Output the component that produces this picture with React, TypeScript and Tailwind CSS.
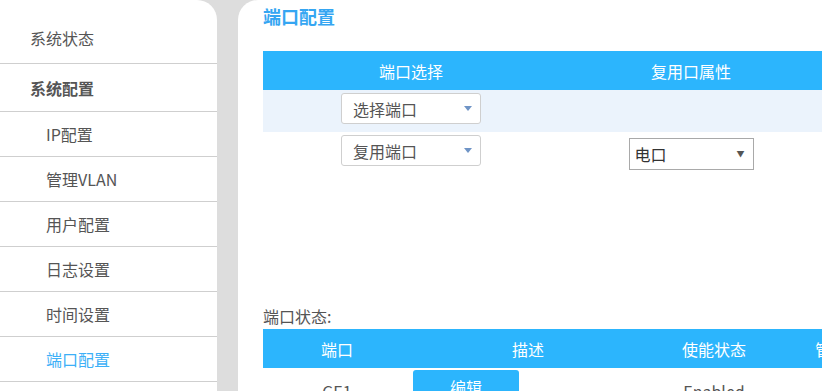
const menu = [
  { label: '用户配置' },
  { label: '日志设置' },
  { label: '时间设置' },
  { label: '端口配置', active: true },
];

const FakeSelect = ({ text }: { text: string }) => (
  <div className="flex h-[31px] w-[140px] items-center justify-between rounded-[3px] border border-[#cfcfcf] bg-white pl-[11px] pr-[8px] text-[16px] text-[#555]">
    <span>{text}</span>
    <span className="h-0 w-0 border-x-[4px] border-t-[5px] border-x-transparent border-t-[#6f94c6]" />
  </div>
);

const App = () => {
  return (
    <div
      className="flex h-[391px] w-[822px] overflow-hidden bg-[#dddddd]"
      style={{ fontFamily: '"Noto Sans CJK SC", "Noto Sans", sans-serif' }}
    >
      {/* sidebar */}
      <div className="w-[217px] shrink-0 rounded-tr-[20px] bg-white text-[16px] text-[#555]">
        <div className="flex h-[64px] items-center border-b border-[#cfcfcf] pl-[30px] pt-[13px]">系统状态</div>
        <div className="flex h-[48px] items-center border-b border-[#cfcfcf] pl-[30px] font-bold">系统配置</div>
        <div className="flex h-[45px] items-center border-b border-[#cfcfcf] pl-[46px] pb-[1px]">IP配置</div>
        <div className="flex h-[45px] items-center border-b border-[#cfcfcf] pl-[46px] pb-[1px]">管理VLAN</div>
        {menu.map((m) => (
          <div
            key={m.label}
            className={`flex h-[45px] items-center border-b border-[#cfcfcf] pl-[46px] pb-[1px] ${m.active ? 'text-[#3db0f7]' : ''}`}
          >
            {m.label}
          </div>
        ))}
      </div>

      {/* content */}
      <div className="ml-[21px] flex-1 overflow-hidden rounded-tl-[20px] bg-white pl-[25px]">
        <h2 className="h-[34px] pt-[2px] text-[18px] font-bold leading-[28px] text-[#35a6f2]">端口配置</h2>

        <div className="mt-[17px] w-[640px]">
          <div className="flex h-[39px] items-center bg-[#2cb5fd] text-[16px] text-white">
            <div className="w-[296px] text-center">端口选择</div>
            <div className="w-[264px] text-center">复用口属性</div>
          </div>
          <div className="flex h-[42px] bg-[#ebf3fc]">
            <div className="flex w-[296px] justify-center pt-[3px]">
              <FakeSelect text="选择端口" />
            </div>
          </div>
          <div className="flex h-[40px]">
            <div className="flex w-[296px] justify-center pt-[3px]">
              <FakeSelect text="复用端口" />
            </div>
            <div className="flex w-[264px] justify-center pt-[6px]">
              <div className="flex h-[32px] w-[125px] items-center justify-between border border-[#a9a9a9] bg-white pl-[5px] pr-[8px] text-[16px] text-[#333]">
                <span>电口</span>
                <span className="text-[8px] text-[#555]">▼</span>
              </div>
            </div>
          </div>
        </div>

        <div className="mt-[132px] h-[24px] text-[16px] leading-[24px] text-[#555]">端口状态:</div>

        <div className="mt-[1px] w-[600px]">
          <div className="flex h-[39px] items-center bg-[#2cb5fd] text-[16px] text-white">
            <div className="w-[148px] text-center">端口</div>
            <div className="w-[234px] text-center">描述</div>
            <div className="w-[138px] text-center">使能状态</div>
            <div className="pl-[32px]">管理</div>
          </div>
          <div className="flex h-[40px] pt-[2px] text-[16px] text-[#555]">
            <div className="w-[148px] pt-[9px] text-center">GE1</div>
            <div className="w-[234px] pl-[2px]">
              <div className="h-[34px] w-[106px] rounded-[3px] bg-[#2cb5fd] pt-[5px] text-center text-white">编辑</div>
            </div>
            <div className="w-[138px] pt-[9px] text-center">Enabled</div>
          </div>
        </div>
      </div>
    </div>
  );
};

export default App;
